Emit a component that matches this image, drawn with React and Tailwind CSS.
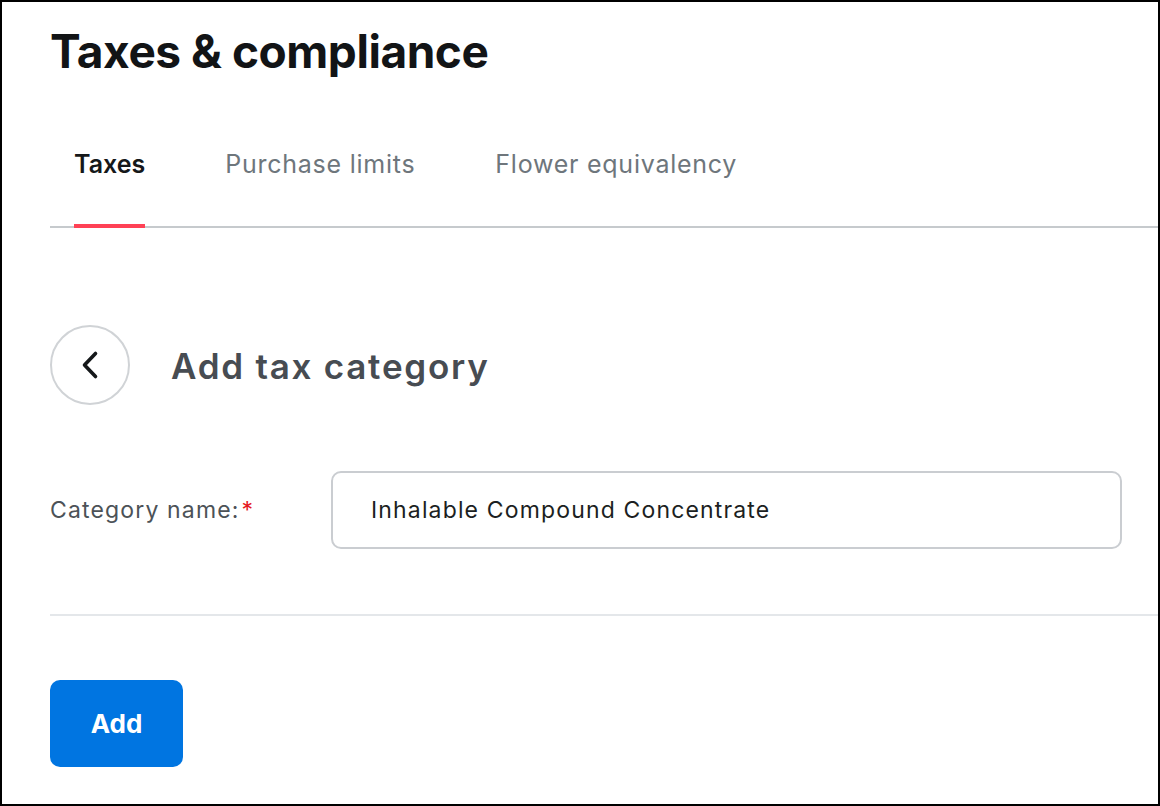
import { useState } from "react";

const TABS = ["Taxes", "Purchase limits", "Flower equivalency"];

export default function App() {
  const [aba, setAba] = useState("Taxes");
  const [nome, setNome] = useState("Inhalable Compound Concentrate");

  return (
    <div className="w-[1160px] h-[806px] border-2 border-black bg-white overflow-hidden font-['Inter',sans-serif]">
      <div className="pl-[48px]">
        <h1 className="pt-[26px] text-[46px] leading-none font-bold text-[#121416] tracking-[-0.01em]">
          Taxes &amp; compliance
        </h1>

        {/* Abas */}
        <div className="mt-[78px] flex gap-[80px] pl-[24px] border-b-2 border-[#c6cacd]">
          {TABS.map(t => (
            <button key={t} type="button" onClick={() => setAba(t)} className="flex flex-col items-stretch">
              <span
                className={`pb-[47px] text-[25px] leading-none ${
                  aba === t ? "font-semibold text-[#15181a]" : "font-normal text-[#6e767c] tracking-[0.03em]"
                }`}
              >
                {t}
              </span>
              <span className={`h-[4px] -mb-[2px] ${aba === t ? "bg-[#ff4155]" : "bg-transparent"}`} />
            </button>
          ))}
        </div>

        {/* Cabeçalho com voltar */}
        <div className="mt-[97px] flex items-center gap-[41px]">
          <button
            type="button"
            className="w-[80px] h-[80px] rounded-full border-2 border-[#d0d3d6] flex items-center justify-center"
          >
            <svg width="18" height="30" viewBox="0 0 18 30" fill="none">
              <path d="M14.5 3.5 L3.5 15 L14.5 26.5" stroke="#15181a" strokeWidth="3.6" strokeLinecap="round" strokeLinejoin="round" />
            </svg>
          </button>
          <h2 className="pt-[2px] text-[35px] leading-none font-semibold text-[#474c52] tracking-[0.05em]">
            Add tax category
          </h2>
        </div>

        {/* Campo */}
        <div className="mt-[66px] flex items-center pr-[36px]">
          <label className="w-[281px] shrink-0 text-[23px] text-[#4c5257] tracking-[0.05em]">
            Category name:<span className="text-[#e5191f] ml-[2px]">*</span>
          </label>
          <input
            type="text"
            value={nome}
            onChange={e => setNome(e.target.value)}
            className="flex-1 h-[78px] rounded-[10px] border-2 border-[#cacdd1] px-[38px] text-[23px] text-[#1c1f22] tracking-[0.05em] outline-none"
          />
        </div>

        <div className="mt-[65px] h-[2px] bg-[#e4e7ea]" />

        <button
          type="button"
          className="mt-[64px] w-[133px] h-[87px] rounded-[10px] bg-[#0075e1] text-white text-[26px] font-bold"
        >
          Add
        </button>
      </div>
    </div>
  );
}
